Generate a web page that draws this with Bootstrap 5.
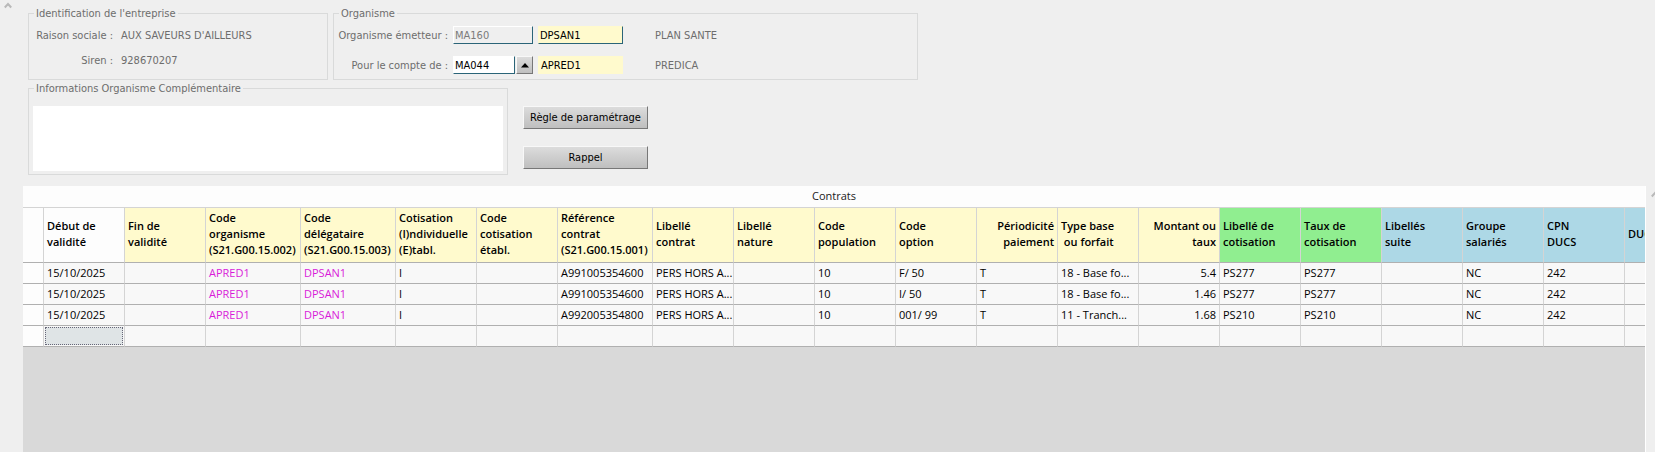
<!DOCTYPE html>
<html lang="fr">
<head>
<meta charset="utf-8">
<meta name="viewport" content="width=device-width, initial-scale=1">
<title>Contrats</title>
<link href="https://cdn.jsdelivr.net/npm/bootstrap@5.3.0/dist/css/bootstrap.min.css" rel="stylesheet">
<style>
  body { background: #efefef; color: #6d6d6d; font: 11px/14px "DejaVu Sans Condensed", "DejaVu Sans", sans-serif; }
  .gutter-start { width: 23px; padding: 2px 0 0 4px; }
  .gutter-end { width: 9px; padding: 5px 0 0 5px; }
  .arrow { display: block; fill: none; stroke: #b9b9b9; stroke-width: 2; }
  .main-pane { min-width: 0; }
  .form-zone { padding: 5px 5px 0; }
  .frames { gap: 5px; }
  .frame { border: 1px solid #d9dada; min-width: 0; }
  .frame legend { float: none; width: auto; margin: 0 0 0 5px; padding: 2px 2px 0; font-size: 11px; line-height: 14px; }
  .frame-id { flex: 0 1 300px; height: 75px; }
  .frame-org { flex: 0 1 585px; height: 75px; }
  .frame-info { flex: 0 1 480px; padding: 0 4px 3px; }
  .frame-info legend { margin-left: 1px; }
  .id-grid { grid-template-columns: 84px 1fr; column-gap: 8px; row-gap: 11px; padding-top: 8px; }
  .org-grid { grid-template-columns: 114px 80px 85px 1fr; column-gap: 5px; row-gap: 12px; padding-top: 5px; }
  .org-grid > label, .org-grid > span { padding-top: 2px; }
  .cell-input { width: 100%; height: 18px; padding: 0 1px; border: 1px solid #fff; border-right-color: #2a6478; border-bottom-color: #2a6478; border-radius: 0; color: #000; background: #fff; min-width: 0; }
  .cell-input:disabled { color: #7b7b7b; background: #efefef; }
  .cell-yellow { background: #fffacd; border-top-color: #fffacd; border-left-color: #fffacd; }
  .cell-flat { border-color: #fffacd; padding-left: 2px; }
  .push { padding-left: 27px; }
  .grey-btn { border: 1px solid #f8f8f8; border-right-color: #777; border-bottom-color: #777; border-radius: 0; background: linear-gradient(#dcdcdc, #bfbfbf); color: #000; font-size: 11px; line-height: 14px; padding: 0; }
  .pick { gap: 1px; }
  .pick-btn { width: 17px; height: 18px; flex: none; }
  .info-text { display: block; width: 100%; height: 65px; margin-top: 10px; border: 0; background: #fff; resize: none; }
  .actions { width: 125px; padding-top: 26px; gap: 17px; margin-left: 15px; }
  .actions .grey-btn { height: 23px; }
  .grid-zone { margin-top: 11px; }
  .grid-fill { background: #d9d9d9; border-right: 1px solid #fff; overflow: hidden; min-width: 0; }
  .grid-title { height: 22px; line-height: 20px; background: #fdfdfd; color: #222; border-bottom: 1px solid #d4d4d4; text-align: center; font-family: "Open Sans", sans-serif; }
  .contracts { table-layout: fixed; width: 1682px; border-collapse: separate; border-spacing: 0; color: #000; font-family: "Open Sans", sans-serif; }
  .contracts th, .contracts td { border-right: 1px solid #d4d4d4; border-bottom: 1px solid #b0b0b0; padding: 0 3px; white-space: nowrap; }
  .contracts th { height: 55px; padding-bottom: 2px; line-height: 16px; font-weight: 600; background: #fffacd; vertical-align: middle; }
  .contracts td { height: 21px; line-height: 20px; background: #f8f8f8; }
  .contracts th.h-white, .contracts td:first-child { background: #fdfdfd; }
  .contracts th.h-green { background: #90ee90; }
  .contracts th.h-blue { background: #add8e6; }
  .contracts td.delegate { color: #d81bd8; }
  .contracts td.current { padding: 1px; }
  .current div { height: 18px; background: #dfe4e6; border: 1px dotted #667; }
  .w-mark { width: 21px; } .w-std { width: 81px; } .w-wide { width: 95px; }
</style>
</head>
<body>
<div class="d-flex min-vh-100">
  <div class="gutter-start flex-shrink-0">
    <svg class="arrow" width="8" height="7" viewBox="0 0 8 7"><path d="M.8 5.5 4 2l3.200 3.500"/></svg>
  </div>
  <main class="main-pane d-flex flex-column flex-grow-1">
    <form class="form-zone d-flex flex-column">
      <div class="frames d-flex">
        <fieldset class="frame frame-id">
          <legend>Identification de l'entreprise</legend>
          <div class="id-grid d-grid">
            <span class="text-end text-nowrap">Raison sociale&nbsp;:</span><span>AUX SAVEURS D'AILLEURS</span>
            <span class="text-end">Siren&nbsp;:</span><span>928670207</span>
          </div>
        </fieldset>
        <fieldset class="frame frame-org">
          <legend>Organisme</legend>
          <div class="org-grid d-grid align-items-center">
            <label class="text-end text-nowrap" for="emetteur">Organisme émetteur&nbsp;:</label>
            <input class="cell-input" id="emetteur" value="MA160" disabled>
            <input class="cell-input cell-yellow" value="DPSAN1" aria-label="Code émetteur">
            <span class="push">PLAN SANTE</span>
            <label class="text-end text-nowrap" for="compte">Pour le compte de&nbsp;:</label>
            <div class="pick d-flex">
              <input class="cell-input" id="compte" value="MA044">
              <button type="button" class="grey-btn pick-btn d-flex align-items-center justify-content-center" aria-label="Choisir"><svg width="8" height="5" viewBox="0 0 8 5"><path d="M4 0 8 4.500H0z"/></svg></button>
            </div>
            <input class="cell-input cell-yellow cell-flat" value="APRED1" aria-label="Code compte">
            <span class="push">PREDICA</span>
          </div>
        </fieldset>
      </div>
      <div class="d-flex">
        <fieldset class="frame frame-info">
          <legend><label for="infos">Informations Organisme Complémentaire</label></legend>
          <textarea class="info-text" id="infos"></textarea>
        </fieldset>
        <div class="actions d-flex flex-column">
          <button type="button" class="grey-btn">Règle de paramétrage</button>
          <button type="button" class="grey-btn">Rappel</button>
        </div>
      </div>
    </form>
    <section class="grid-zone d-flex flex-grow-1">
      <div class="grid-fill flex-grow-1">
        <div class="grid-title" id="titre">Contrats</div>
        <table class="contracts" aria-labelledby="titre">
          <colgroup>
            <col class="w-mark"><col class="w-std" span="2"><col class="w-wide" span="2"><col class="w-std" span="2"><col class="w-wide"><col class="w-std" span="13">
          </colgroup>
          <thead>
            <tr>
              <th class="h-white"></th>
              <th class="h-white">Début de<br>validité</th>
              <th>Fin de<br>validité</th>
              <th>Code<br>organisme<br>(S21.G00.15.002)</th>
              <th>Code<br>délégataire<br>(S21.G00.15.003)</th>
              <th>Cotisation<br>(I)ndividuelle<br>(E)tabl.</th>
              <th>Code<br>cotisation<br>établ.</th>
              <th>Référence<br>contrat<br>(S21.G00.15.001)</th>
              <th>Libellé<br>contrat</th>
              <th>Libellé<br>nature</th>
              <th>Code<br>population</th>
              <th>Code<br>option</th>
              <th class="text-end">Périodicité<br>paiement</th>
              <th>Type base<br>&nbsp;ou forfait</th>
              <th class="text-end">Montant ou<br>taux</th>
              <th class="h-green">Libellé de<br>cotisation</th>
              <th class="h-green">Taux de<br>cotisation</th>
              <th class="h-blue">Libellés<br>suite</th>
              <th class="h-blue">Groupe<br>salariés</th>
              <th class="h-blue">CPN<br>DUCS</th>
              <th class="h-blue">DUC</th>
            </tr>
          </thead>
          <tbody>
            <tr><td></td><td>15/10/2025</td><td></td><td class="delegate">APRED1</td><td class="delegate">DPSAN1</td><td>I</td><td></td><td>A991005354600</td><td>PERS HORS A...</td><td></td><td>10</td><td>F/ 50</td><td>T</td><td>18 - Base fo...</td><td class="text-end">5.4</td><td>PS277</td><td>PS277</td><td></td><td>NC</td><td>242</td><td></td></tr>
            <tr><td></td><td>15/10/2025</td><td></td><td class="delegate">APRED1</td><td class="delegate">DPSAN1</td><td>I</td><td></td><td>A991005354600</td><td>PERS HORS A...</td><td></td><td>10</td><td>I/ 50</td><td>T</td><td>18 - Base fo...</td><td class="text-end">1.46</td><td>PS277</td><td>PS277</td><td></td><td>NC</td><td>242</td><td></td></tr>
            <tr><td></td><td>15/10/2025</td><td></td><td class="delegate">APRED1</td><td class="delegate">DPSAN1</td><td>I</td><td></td><td>A992005354800</td><td>PERS HORS A...</td><td></td><td>10</td><td>001/ 99</td><td>T</td><td>11 - Tranch...</td><td class="text-end">1.68</td><td>PS210</td><td>PS210</td><td></td><td>NC</td><td>242</td><td></td></tr>
            <tr><td></td><td class="current"><div></div></td><td></td><td></td><td></td><td></td><td></td><td></td><td></td><td></td><td></td><td></td><td></td><td></td><td></td><td></td><td></td><td></td><td></td><td></td><td></td></tr>
          </tbody>
        </table>
      </div>
      <div class="gutter-end flex-shrink-0 overflow-hidden">
        <svg class="arrow" width="8" height="7" viewBox="0 0 8 7"><path d="M.8 5.500 4 2l3.200 3.500"/></svg>
      </div>
    </section>
  </main>
</div>
<script src="https://cdn.jsdelivr.net/npm/bootstrap@5.3.0/dist/js/bootstrap.bundle.min.js"></script>
</body>
</html>
